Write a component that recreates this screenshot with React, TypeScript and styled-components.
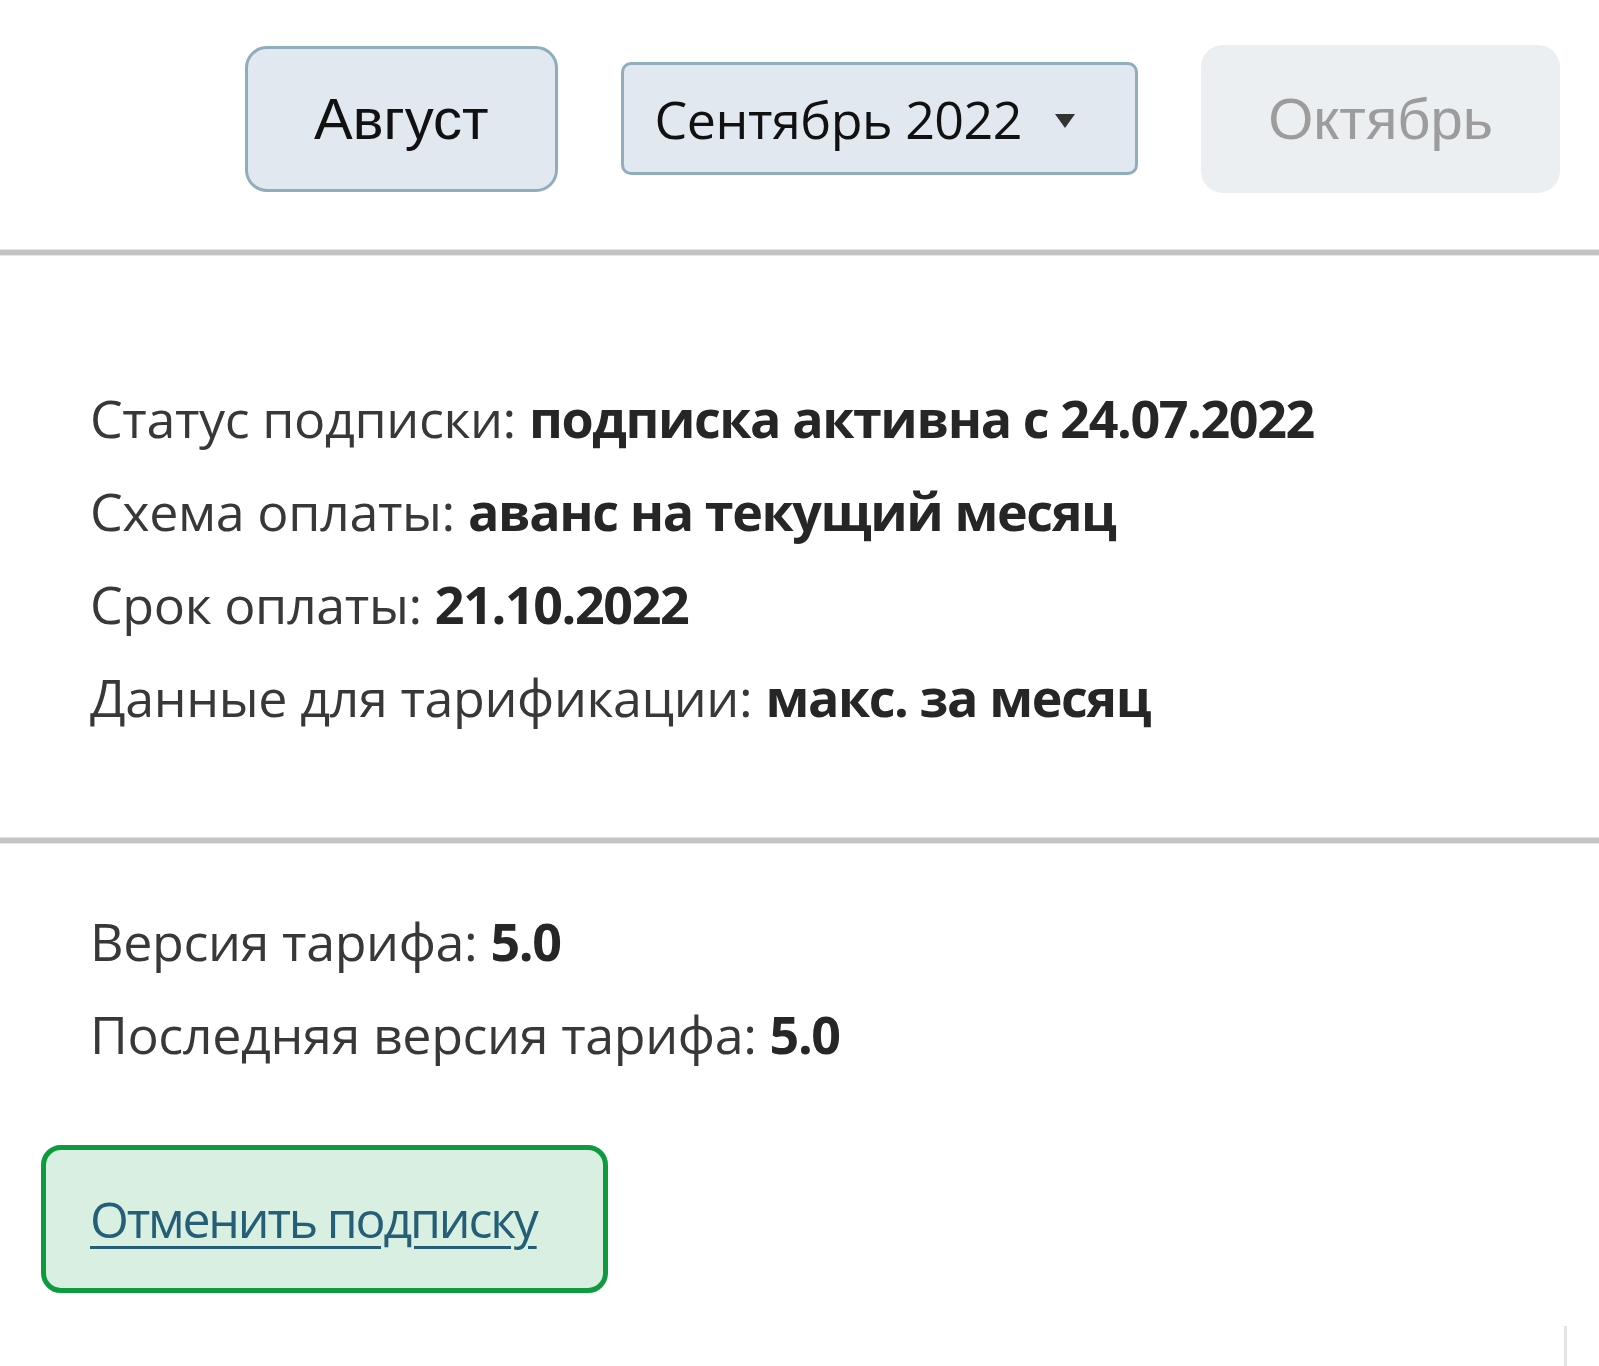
import React from "react";
import styled, { createGlobalStyle } from "styled-components";

const Global = createGlobalStyle`
  html, body { margin: 0; padding: 0; background: #fff; }
  body { font-family: "Open Sans", "Noto Sans", sans-serif; color: #363636; }
`;

const Page = styled.div`
  width: 1599px;
  display: flex;
  flex-direction: column;
`;

const Toolbar = styled.div`
  height: 249px;
  display: flex;
  align-items: center;
  padding: 0 39px 12px 245px;
  gap: 63px;
  box-sizing: border-box;
`;

const MonthButton = styled.button<{ $disabled?: boolean }>`
  box-sizing: border-box;
  height: ${(p) => (p.$disabled ? "148px" : "146px")};
  padding: 0 ${(p) => (p.$disabled ? "64px" : "66px")};
  border-radius: 22px;
  border: 3px solid ${(p) => (p.$disabled ? "#eceff1" : "#8fadbd")};
  background: ${(p) => (p.$disabled ? "#eceff1" : "#e1e8ef")};
  color: ${(p) => (p.$disabled ? "#9c9c9c" : "#111")};
  font-family: "Liberation Sans", Arial, sans-serif;
  font-size: 58px;
  line-height: 1;
  white-space: nowrap;
  margin-left: ${(p) => (p.$disabled ? "auto" : "0")};
`;

const Select = styled.div`
  box-sizing: border-box;
  width: 518px;
  height: 113px;
  border: 3px solid #8fadbd;
  border-radius: 10px;
  background: #e1e8ef;
  display: flex;
  align-items: center;
  padding: 0 0 0 31px;
  color: #111;
  font-family: "Open Sans", sans-serif;
  font-size: 52px;
  letter-spacing: -0.5px;
  white-space: nowrap;
`;

const SelectLabel = styled.span`
  flex: 1;
`;

const Caret = styled.span`
  width: 0;
  height: 0;
  border-left: 10px solid transparent;
  border-right: 10px solid transparent;
  border-top: 14px solid #333;
  margin-right: 60px;
  margin-top: 4px;
`;

const Divider = styled.div`
  height: 7px;
  background: linear-gradient(#e2e2e2 0 1px, #c4c4c4 1px 6px, #e6e6e6 6px 7px);
`;

const Section = styled.section<{ $top: number; $bottom: number }>`
  padding: ${(p) => p.$top}px 0 ${(p) => p.$bottom}px 90px;
  display: flex;
  flex-direction: column;
`;

const Line = styled.div`
  font-size: 52px;
  letter-spacing: -0.4px;
  line-height: 93px;
  color: #383838;
  white-space: nowrap;
`;

const Value = styled.b`
  font-weight: 700;
  letter-spacing: -1.4px;
  color: #262626;
`;

const CancelBox = styled.div`
  margin: 0 0 0 41px;
  width: 567px;
  height: 148px;
  box-sizing: border-box;
  border: 5px solid #0e9b3e;
  border-radius: 20px;
  background: #d8efe2;
  display: flex;
  align-items: center;
  padding-left: 44px;
`;

const CancelLink = styled.a`
  font-size: 50px;
  letter-spacing: -2.2px;
  white-space: nowrap;
  color: #245e77;
  text-decoration: underline;
  text-underline-offset: 8px;
  text-decoration-thickness: 3px;
  cursor: pointer;
`;

const Footer = styled.div`
  display: flex;
  justify-content: flex-end;
  padding: 33px 32px 0 0;
`;

const EdgeMark = styled.div`
  width: 3px;
  height: 41px;
  background: #e3e3e3;
`;

export default function App() {
  return (
    <Page>
      <Global />
      <Toolbar>
        <MonthButton>Август</MonthButton>
        <Select>
          <SelectLabel>Сентябрь 2022</SelectLabel>
          <Caret />
        </Select>
        <MonthButton $disabled>Октябрь</MonthButton>
      </Toolbar>
      <Divider />
      <Section $top={115} $bottom={94}>
        <Line>
          Статус подписки: <Value>подписка активна с 24.07.2022</Value>
        </Line>
        <Line>
          Схема оплаты: <Value>аванс на текущий месяц</Value>
        </Line>
        <Line>
          Срок оплаты: <Value>21.10.2022</Value>
        </Line>
        <Line>
          Данные для тарификации: <Value>макс. за месяц</Value>
        </Line>
      </Section>
      <Divider />
      <Section $top={50} $bottom={65}>
        <Line>
          Версия тарифа: <Value>5.0</Value>
        </Line>
        <Line>
          Последняя версия тарифа: <Value>5.0</Value>
        </Line>
      </Section>
      <CancelBox>
        <CancelLink>Отменить подписку</CancelLink>
      </CancelBox>
      <Footer>
        <EdgeMark />
      </Footer>
    </Page>
  );
}
